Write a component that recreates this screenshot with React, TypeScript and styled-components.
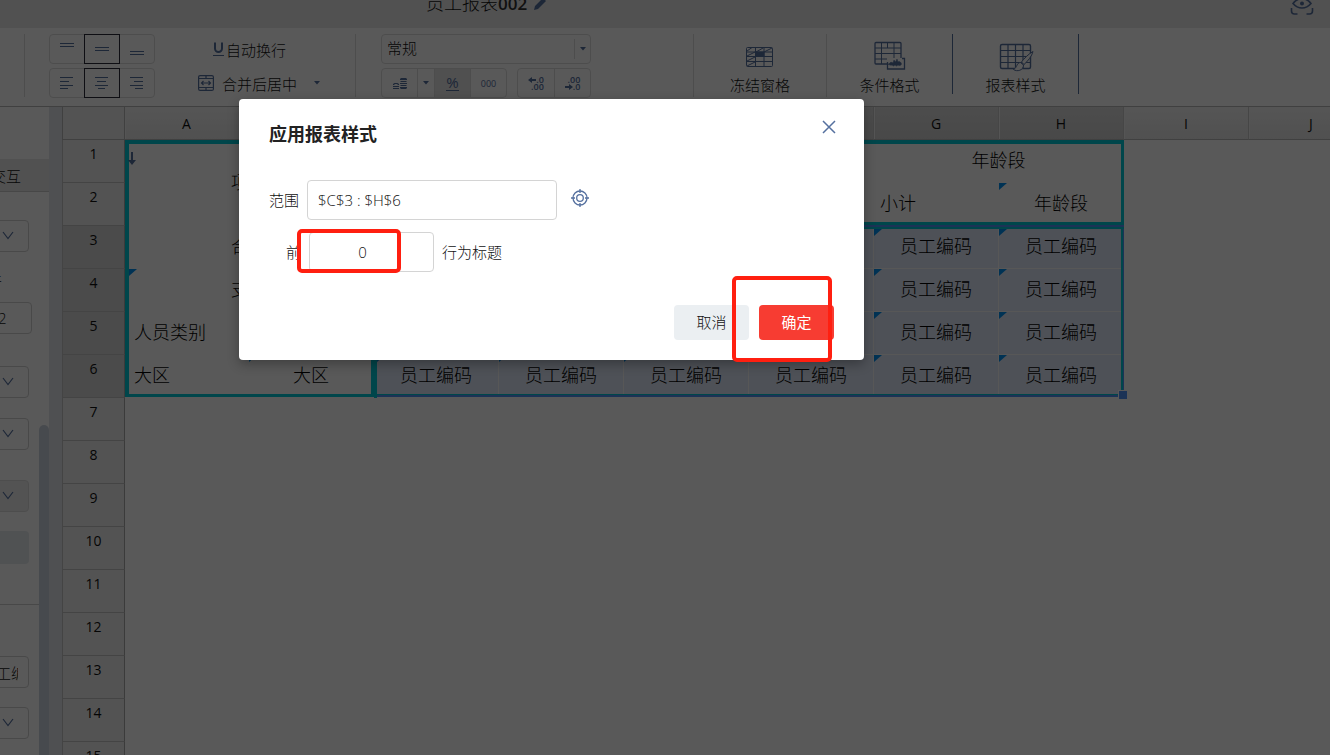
import React from 'react';
import styled, { createGlobalStyle, css } from 'styled-components';

const ink = '#55709f';
const line = '#dcdcdc';
const teal = '#00c8d6';
const blue = '#5292f7';
const fontStack = '"Open Sans", "Noto Sans CJK SC", sans-serif';

const GlobalStyle = createGlobalStyle`
  *, *::before, *::after { box-sizing: border-box; }
  body { margin: 0; overflow: hidden; font-family: ${fontStack}; font-size: 15px; font-weight: 300; color: #111; background: #fff; }
  button, input, select { font-family: ${fontStack}; font-size: 15px; font-weight: 300; color: inherit; margin: 0; }
  svg { display: block; flex: none; }
`;

const App = styled.div`
  position: relative;
  display: flex;
  flex-direction: column;
  height: 100vh;
  overflow: hidden;
`;

/* ---------- title bar ---------- */
const TitleBar = styled.header`
  display: flex;
  flex: none;
  align-items: center;
  height: 50px;
  margin-top: -22px;
  padding: 0 16px 0 426px;
  background: #e8e8e8;
`;
const Title = styled.h1`
  margin: 0;
  font-size: 18px;
  line-height: 24px;
  font-weight: 300;
  b { font-size: 17px; font-weight: 600; color: #333; }
`;
const IconButton = styled.button<{ $push?: boolean }>`
  display: flex;
  padding: 0;
  border: 0;
  background: none;
  margin-left: ${p => (p.$push ? 'auto' : '6px')};
`;

/* ---------- toolbar ---------- */
const Toolbar = styled.div`
  display: flex;
  flex: none;
  height: 79px;
  padding-top: 6px;
  border-bottom: 1px solid #b8b8b8;
`;
const Section = styled.div<{ $w: number; $pad?: number; $strong?: boolean }>`
  display: flex;
  flex: none;
  width: ${p => p.$w}px;
  height: ${p => (p.$strong ? 60 : 63)}px;
  padding-left: ${p => p.$pad ?? 0}px;
  border-right: 1px solid ${p => (p.$strong ? ink : line)};
`;
const Stack = styled.div`
  display: flex;
  flex-direction: column;
  gap: 4px;
  > * { flex: none; }
`;
const Row = styled.div<{ $gap?: number }>`
  display: flex;
  gap: ${p => p.$gap ?? 0}px;
`;
const TextTools = styled(Stack)`
  margin-left: 43px;
`;
const Group = styled.div`
  display: flex;
  height: 30px;
  border: 1px solid ${line};
  border-radius: 4px;
`;
const ToolButton = styled.button<{ $w: number; $framed?: boolean; $active?: boolean; $divided?: boolean }>`
  display: flex;
  align-items: center;
  justify-content: center;
  width: ${p => p.$w}px;
  padding: 0;
  border: 0;
  background: ${p => (p.$active ? '#e4e4e4' : 'none')};
  ${p => p.$divided && css`border-right: 1px solid ${line};`}
  ${p => p.$framed && css`border: 1px solid #2a2a38; height: 30px; margin-top: -1px;`}
`;
const TextTool = styled.button<{ $indent?: number; $gap?: number }>`
  display: flex;
  align-items: center;
  gap: ${p => p.$gap ?? 0}px;
  height: 30px;
  padding: 0 0 0 ${p => p.$indent ?? 0}px;
  border: 0;
  background: none;
  white-space: nowrap;
`;
const FormatBox = styled.div`
  position: relative;
  width: 210px;
  height: 30px;
`;
const FormatSelect = styled.select`
  width: 100%;
  height: 100%;
  padding: 0 24px 2px 5px;
  border: 1px solid ${line};
  border-radius: 4px;
  background: none;
  appearance: none;
`;
const FormatArrow = styled.span`
  position: absolute;
  top: 5px;
  right: 1px;
  display: flex;
  align-items: center;
  justify-content: center;
  width: 16px;
  height: 20px;
  border-left: 1px solid ${line};
  pointer-events: none;
`;
const BigTool = styled.button`
  display: flex;
  flex: 1;
  flex-direction: column;
  align-items: center;
  height: 63px;
  padding: 6px 0 0;
  border: 0;
  background: none;
  line-height: 26px;
`;

/* ---------- side panel ---------- */
const Body = styled.div`
  display: flex;
  flex: 1;
  min-height: 0;
`;
const Panel = styled.aside`
  position: relative;
  flex: none;
  width: 49px;
  overflow: hidden;
`;
const PanelForm = styled.div`
  display: flex;
  flex-direction: column;
  align-items: flex-start;
  margin-left: -24px;
`;
const Tab = styled.button`
  width: 73px;
  height: 33px;
  margin-top: 52px;
  padding: 0 0 0 15px;
  text-align: left;
  border: 0;
  border-bottom: 1px solid #ccc;
  background: #e9e9e9;
`;
const fieldBox = css<{ $off?: boolean }>`
  height: 32px;
  border: 1px solid #d0d0d0;
  border-radius: 4px;
  background: ${p => (p.$off ? '#e8e8e8' : 'none')};
`;
const PickerBox = styled.div<{ $top: number }>`
  position: relative;
  width: 53px;
  margin-top: ${p => p.$top}px;
  svg { position: absolute; right: 15px; top: 11px; pointer-events: none; }
`;
const PickerSelect = styled.select<{ $off?: boolean }>`
  ${fieldBox}
  display: block;
  width: 100%;
  appearance: none;
`;
const PanelLabel = styled.label`
  height: 20px;
  margin: 18px 0 12px -4px;
  line-height: 20px;
`;
const PanelInput = styled.input<{ $w: number; $top?: number }>`
  ${fieldBox}
  width: ${p => p.$w}px;
  margin-top: ${p => p.$top ?? 0}px;
  padding: 0 10px 0 4px;
`;
const Swatch = styled.div`
  width: 53px;
  height: 33px;
  margin-top: 19px;
  border-radius: 4px;
  background: #e6eaee;
`;
const Rule = styled.hr`
  width: 63px;
  height: 1px;
  margin: 40px 0 0;
  border: 0;
  background: #cfcfcf;
`;
const Thumb = styled.div`
  position: absolute;
  top: 318px;
  right: 0;
  width: 10px;
  height: 600px;
  border-radius: 5px;
  background: #ccd4de;
`;
const Gutter = styled.div`
  flex: none;
  width: 13px;
  background: #e2e6ec;
`;

/* ---------- sheet ---------- */
const Sheet = styled.div`
  position: relative;
  flex: 1;
  overflow: hidden;
`;
const Table = styled.table`
  width: 1312px;
  table-layout: fixed;
  border-collapse: separate;
  border-spacing: 0;
`;
const Corner = styled.th`
  width: 63px;
  height: 33px;
  padding: 0;
  background: #eee;
  border: solid #b8b8b8;
  border-width: 0 1px 1px;
`;
const ColHead = styled.th<{ $on?: boolean; $w: number }>`
  width: ${p => p.$w}px;
  padding: 0;
  font-size: 14px;
  font-weight: 400;
  background: linear-gradient(${p => (p.$on ? '#dcdcdc, #cfcfcf' : '#f4f4f4, #e6e6e6')});
  border-right: 1px solid #c8c8c8;
  border-bottom: 1px solid #b8b8b8;
  box-shadow: inset 1px 0 #f4f4f4;
`;
const RowHead = styled.th<{ $on?: boolean }>`
  height: 43px;
  padding: 3px 0 0;
  font-size: 14px;
  line-height: 22px;
  font-weight: 400;
  vertical-align: top;
  background: ${p => (p.$on ? '#d6d6d6' : '#eee')};
  border: solid #c4c4c4;
  border-width: 0 1px 1px;
  border-right-color: #a8a8a8;
`;

/* Lower-case edges carry the table frame, upper-case ones also touch the selection frame. */
const edgeLines: Record<string, string[]> = {
  t: [`inset 0 4px ${teal}`],
  l: [`inset 4px 0 ${teal}`],
  r: [`inset -3px 0 ${teal}`],
  b: ['inset 0 -1px #fff', `inset 0 -4px ${teal}`],
  L: [`inset 3px 0 ${teal}`],
  M: [`inset 0 -1px ${blue}`, `inset 0 -4px ${teal}`],
  T: [`inset 0 1px ${blue}`, `inset 0 3px ${teal}`],
  B: ['inset 0 -1px #fff', `inset 0 -3px ${blue}`, `inset 0 -4px ${teal}`],
  R: [`inset -1px 0 ${blue}`, `inset -3px 0 ${teal}`],
};
const edgeShadow = (edges: string, selected?: boolean) => {
  const out = edges.split('').flatMap(e => edgeLines[e]);
  if (selected) out.push('inset -1px -1px #fafafa');
  return out.length ? out.join(', ') : 'none';
};

const Cell = styled.td<{ $edges?: string; $sel?: boolean; $left?: number }>`
  position: relative;
  height: 43px;
  padding: 0 1px 3px ${p => p.$left ?? 0}px;
  font-size: 18px;
  line-height: 26px;
  color: #000;
  text-align: ${p => (p.$left ? 'left' : 'center')};
  background: ${p => (p.$sel ? '#e0e8f8' : '#fff')};
  box-shadow: ${p => edgeShadow(p.$edges ?? '', p.$sel)};
`;
const Flag = styled.span<{ $x?: number; $y?: number }>`
  position: absolute;
  left: ${p => p.$x ?? 0}px;
  top: ${p => p.$y ?? 0}px;
  border-top: 7px solid #0090f0;
  border-right: 8px solid transparent;
`;
const DownArrow = styled.svg`
  position: absolute;
  left: 3px;
  top: 12px;
`;
const Handle = styled.span`
  position: absolute;
  right: -3px;
  bottom: -1px;
  z-index: 1;
  width: 9px;
  height: 9px;
  border: solid #fff;
  border-width: 1px 0 0 1px;
  background: ${blue};
`;

/* ---------- dialog ---------- */
const Overlay = styled.div`
  position: absolute;
  inset: 0;
  z-index: 2;
  padding: 99px 0 0 239px;
  background: rgba(0, 0, 0, 0.65);
`;
const Dialog = styled.section`
  position: relative;
  width: 625px;
  max-width: 100%;
  padding: 20px 30px;
  border-radius: 4px;
  background: #fff;
  box-shadow: 0 4px 12px rgba(0, 0, 0, 0.3);
`;
const DialogHead = styled.div`
  display: flex;
  align-items: flex-start;
  justify-content: space-between;
  height: 61px;
  padding-top: 1px;
  h2 { margin: 0; font-size: 18px; line-height: 28px; font-weight: 700; color: #222; }
  button { margin-right: -2px; }
`;
const FormRow = styled.div<{ $indent?: number }>`
  display: flex;
  align-items: center;
  gap: 8px;
  height: 40px;
  margin-bottom: 12px;
  padding-left: ${p => p.$indent ?? 0}px;
  label, span { padding-bottom: 2px; }
`;
const TextBox = styled.input<{ $w: number; $center?: boolean }>`
  width: ${p => p.$w}px;
  height: 40px;
  padding: ${p => (p.$center ? '0 26px 0 8px' : '0 10px')};
  text-align: ${p => (p.$center ? 'center' : 'left')};
  border: 1px solid #d4d4d4;
  border-radius: 4px;
  background: #fff;
`;
const Actions = styled.div`
  display: flex;
  justify-content: flex-end;
  gap: 10px;
  margin-top: 33px;
`;
const ActionButton = styled.button<{ $primary?: boolean }>`
  width: 75px;
  height: 35px;
  padding: 0 0 2px;
  border: 0;
  border-radius: 4px;
  font-weight: ${p => (p.$primary ? 400 : 300)};
  color: ${p => (p.$primary ? '#fff' : '#111')};
  background: ${p => (p.$primary ? '#f73c32' : '#ebeff2')};
`;
const Marker = styled.div<{ $x: number; $y: number; $w: number; $h: number }>`
  position: absolute;
  left: ${p => p.$x}px;
  top: ${p => p.$y}px;
  width: ${p => p.$w}px;
  height: ${p => p.$h}px;
  border: 4px solid #ff1f10;
  border-radius: 5px;
  pointer-events: none;
`;

/* ---------- icons ---------- */
const Caret = () => (
  <svg width="6" height="4" viewBox="0 0 6 4" fill={ink}><path d="M0 0h6L3 3.5z" /></svg>
);
const Chevron = () => (
  <svg width="12" height="9" viewBox="0 0 12 9" fill="none" stroke={ink} strokeWidth="1.2"><path d="M1 1l5 6.500 5-6.500" /></svg>
);
const Lines = ({ d }: { d: string }) => (
  <svg width="16" height="16" viewBox="0 0 16 16" fill="none" stroke={ink}><path d={d} /></svg>
);
const UnderlineIcon = () => (
  <svg width="13" height="16" viewBox="0 0 13 16" fill="none" stroke={ink}>
    <path d="M2 1.500V7.500a3.500 3.500 0 0 0 7 0V1.500" strokeWidth="2" /><path d="M0 14.500h11" />
  </svg>
);
const MergeIcon = () => (
  <svg width="16" height="16" viewBox="0 0 16 16" fill="none" stroke={ink} strokeWidth="1.2">
    <rect x=".6" y=".6" width="14.800" height="14.800" rx="1.500" />
    <path d="M1 3.500h14M1 12.500h14M8 1v3M8 12v3M3.500 8h9M5.500 6l-2 2 2 2M10.500 6l2 2-2 2" />
  </svg>
);
const CoinsIcon = () => (
  <svg width="14" height="11" viewBox="0 0 14 11" fill={ink}>
    <path d="M8 0h5l1 1v1H7V1zM7.500 3h6v1h-6zM7 5h7v1H7zM7.500 7h6v1h-6zM7 9h7v1l-1 1H8l-1-1zM1.500 5h3L6 6v1H5L4 6H2L1 7H0V6zM0 8h6v1H0zM0 10h6v1H0z" />
  </svg>
);
const MoneyText = styled.span<{ $size: number; $line?: boolean }>`
  color: ${ink};
  font-size: ${p => p.$size}px;
  font-weight: 400;
  line-height: 17px;
  ${p => p.$line && css`border-bottom: 1px solid ${ink}; line-height: 15px;`}
`;
const Decimals = styled.span`
  display: flex;
  flex-direction: column;
  align-items: flex-end;
  color: ${ink};
  font-size: 9px;
  font-weight: 600;
  line-height: 7px;
  span { display: flex; align-items: center; }
`;
const ArrowIcon = ({ left }: { left?: boolean }) => (
  <svg width="8" height="6" viewBox="0 0 8 6" fill={ink}>
    <path d={left ? 'M0 3l4-3v2h4v2H4v2z' : 'M8 3L4 0v2H0v2h4v2z'} />
  </svg>
);
const FreezeIcon = () => (
  <svg width="36" height="32" viewBox="0 0 36 32" fill="none" stroke={ink}>
    <rect x="4.500" y="7.500" width="26" height="19" rx="1" />
    <path d="M13.500 7.500v19M22 7.500v19M4.500 12h26M4.500 16.500h26M4.500 21.500h26M5 11l5-3.500M5 16l8-4M5 21l8-4M5 26l8-4M14 12l7-4M22 12l8-4" />
    <path d="M13.500 12H22v4.500h-8.500z" fill={ink} />
  </svg>
);
const ConditionIcon = () => (
  <svg width="36" height="32" viewBox="0 0 36 32" fill="none" stroke={ink}>
    <path d="M15 24H4a1 1 0 0 1-1-1V3.500a1 1 0 0 1 1-1h24a1 1 0 0 1 1 1V18" strokeWidth="1.300" />
    <path d="M9.500 2.500V24M15.500 2.500V8M22 2.500V18M3 8h26M3 13.500h26M3 19h12" />
    <path d="M15.500 22v7h17V18.500H30" strokeWidth="1.300" />
    <path d="M17 24c1-2 3-2 4-1l1-3 1.500 2L25 19l1 3c1.500-1 3 0 3.500 2-.5 1.500-2 2-3.500 1l-1.500 1-1.500-1-1.500 1-1.500-1c-1.500.5-2.500 0-4-1z" fill={ink} strokeWidth=".5" />
  </svg>
);
const StyleIcon = () => (
  <svg width="36" height="32" viewBox="0 0 36 32" fill="none" stroke={ink}>
    <rect x="2.500" y="4.500" width="30" height="24" rx="1.500" strokeWidth="1.400" />
    <path d="M10 4.500v24M17.500 4.500v24M25 4.500v24M2.500 10.500h30M2.500 16.500h30M2.500 22.500h30" strokeWidth="1.200" />
    <path d="M35 11.500c-4.500 2.500-9 7-11.500 10.500l2.500 2.500c3.500-3 8-8.500 9-13zM22.500 22.500c-4 0-3 5-7 7 3.500 2.500 10 1 10-4.500z" fill="#fff" />
  </svg>
);
const PencilIcon = () => (
  <svg width="15" height="15" viewBox="0 0 15 15" fill={ink}><path d="M1 14l1-4 8-8 3 3-8 8zM11 1l1-1 3 3-1 1z" /></svg>
);
const PreviewIcon = () => (
  <svg width="24" height="24" viewBox="0 0 24 24" fill="none" stroke={ink} strokeWidth="1.600">
    <path d="M1.500 17v3a3 3 0 0 0 3 3h3M22.500 17v3a3 3 0 0 1-3 3h-3M1.500 7V5a3 3 0 0 1 3-3h3M22.500 7V5a3 3 0 0 0-3-3h-3" />
    <path d="M3 12.500c5-6.500 13-6.500 18 0-5 6-13 6-18 0z" /><circle cx="12" cy="12.500" r="1.200" fill={ink} />
  </svg>
);
const CloseIcon = () => (
  <svg width="14" height="14" viewBox="0 0 14 14" stroke={ink} strokeWidth="1.500"><path d="M1 1l12 12M13 1L1 13" /></svg>
);
const TargetIcon = () => (
  <svg width="18" height="18" viewBox="0 0 18 18" fill="none" stroke={ink} strokeWidth="1.300">
    <circle cx="9" cy="9" r="7" /><circle cx="9" cy="9" r="3.300" />
    <path d="M9 0v4M9 14v4M0 9h4M14 9h4" />
  </svg>
);
const PickButton = styled(IconButton)`
  margin: -4px 0 0 6px;
`;

const Picker = ({ top, off, label }: { top: number; off?: boolean; label: string }) => (
  <PickerBox $top={top}>
    <PickerSelect $off={off} disabled={off} aria-label={label} />
    <Chevron />
  </PickerBox>
);

const columns = ['A', 'B', 'C', 'D', 'E', 'F', 'G', 'H', 'I', 'J'];
const dataCols = ['C', 'D', 'E', 'F', 'G', 'H'];

const dataCells = (row: number) =>
  dataCols.map(c => {
    const edges = (row === 3 ? 'T' : '') + (c === 'C' ? 'L' : '') + (row === 6 ? 'B' : '') + (c === 'H' ? 'R' : '');
    return (
      <Cell key={c} $sel $edges={edges}>
        <Flag $x={c === 'C' ? 3 : 0} $y={row === 3 ? 3 : 0} />
        员工编码
        {c === 'H' && row === 6 && <Handle />}
      </Cell>
    );
  });

const rowCells = (row: number) => {
  switch (row) {
    case 1:
      return (
        <>
          <Cell colSpan={2} rowSpan={2} $edges="tlr">
            <DownArrow width="8" height="13" viewBox="0 0 8 13" fill={ink}><path d="M3 0h2v8h3l-4 5-4-5h3z" /></DownArrow>
            项目
          </Cell>
          <Cell $edges="tL" /><Cell $edges="t" /><Cell $edges="t" /><Cell $edges="t" />
          <Cell colSpan={2} $edges="tr">年龄段</Cell>
        </>
      );
    case 2:
      return (
        <>
          <Cell $edges="ML" /><Cell $edges="M" /><Cell $edges="M" /><Cell $edges="M" />
          <Cell $left={6} $edges="M">小计</Cell>
          <Cell $edges="Mr"><Flag />年龄段</Cell>
        </>
      );
    case 3:
      return <><Cell colSpan={2} $edges="lr">合计</Cell>{dataCells(3)}</>;
    case 4:
      return <><Cell colSpan={2} $edges="lr"><Flag $x={4} />支部</Cell>{dataCells(4)}</>;
    case 5:
      return <><Cell $left={9} $edges="l">人员类别</Cell><Cell $edges="r" />{dataCells(5)}</>;
    case 6:
      return <><Cell $left={9} $edges="bl">大区</Cell><Cell $edges="br"><Flag />大区</Cell>{dataCells(6)}</>;
    default:
      return null;
  }
};

export default function ReportEditor() {
  return (
    <App>
      <GlobalStyle />
      <TitleBar>
        <Title>员工报表<b>002</b></Title>
        <IconButton aria-label="重命名"><PencilIcon /></IconButton>
        <IconButton $push aria-label="预览"><PreviewIcon /></IconButton>
      </TitleBar>

      <Toolbar>
        <Section $w={25} />
        <Section $w={331} $pad={24}>
          <Stack>
            <Group>
              <ToolButton $w={34} aria-label="顶端对齐"><Lines d="M1 2.500h14M1 5.500h14" /></ToolButton>
              <ToolButton $w={36} $framed aria-label="垂直居中"><Lines d="M1 6.500h14M1 9.500h14" /></ToolButton>
              <ToolButton $w={34} aria-label="底端对齐"><Lines d="M1 10.500h14M1 13.500h14" /></ToolButton>
            </Group>
            <Group>
              <ToolButton $w={34} aria-label="左对齐"><Lines d="M1 2.500h13M1 6.500h9M1 10.500h13M1 13.500h8" /></ToolButton>
              <ToolButton $w={36} $framed aria-label="居中"><Lines d="M1 2.500h13M3 6.500h9M1 10.500h13M4 13.500h7" /></ToolButton>
              <ToolButton $w={34} aria-label="右对齐"><Lines d="M1 2.500h13M5 6.500h9M1 10.500h13M6 13.500h8" /></ToolButton>
            </Group>
          </Stack>
          <TextTools>
            <TextTool $indent={15}><UnderlineIcon />自动换行</TextTool>
            <Row $gap={17}>
              <TextTool $gap={8}><MergeIcon />合并后居中</TextTool>
              <TextTool aria-label="合并选项"><Caret /></TextTool>
            </Row>
          </TextTools>
        </Section>
        <Section $w={338} $pad={25}>
          <Stack>
            <FormatBox>
              <FormatSelect aria-label="数字格式"><option>常规</option></FormatSelect>
              <FormatArrow><Caret /></FormatArrow>
            </FormatBox>
            <Row $gap={10}>
              <Group>
                <ToolButton $w={36} $divided aria-label="货币"><CoinsIcon /></ToolButton>
                <ToolButton $w={17} $divided aria-label="货币选项"><Caret /></ToolButton>
                <ToolButton $w={36} $active $divided><MoneyText $size={15} $line>%</MoneyText></ToolButton>
                <ToolButton $w={35}><MoneyText $size={9}>000</MoneyText></ToolButton>
              </Group>
              <Group>
                <ToolButton $w={37} $divided><Decimals><span><ArrowIcon left />.0</span><span>.00</span></Decimals></ToolButton>
                <ToolButton $w={35}><Decimals><span>.00</span><span><ArrowIcon />.0</span></Decimals></ToolButton>
              </Group>
            </Row>
          </Stack>
        </Section>
        <Section $w={133}><BigTool><FreezeIcon />冻结窗格</BigTool></Section>
        <Section $w={126} $strong><BigTool><ConditionIcon />条件格式</BigTool></Section>
        <Section $w={126} $strong><BigTool><StyleIcon />报表样式</BigTool></Section>
      </Toolbar>

      <Body>
        <Panel>
          <PanelForm>
            <Tab>交互</Tab>
            <Picker top={28} label="字段" />
            <PanelLabel htmlFor="cond">条件</PanelLabel>
            <PanelInput id="cond" $w={56} defaultValue="002" />
            <Picker top={32} label="类型" />
            <Picker top={20} label="格式" />
            <Picker top={30} off label="排序" />
            <Swatch />
            <Rule />
            <PanelInput $w={53} $top={51} defaultValue="员工编码" aria-label="名称" />
            <Picker top={19} label="汇总" />
          </PanelForm>
          <Thumb />
        </Panel>
        <Gutter />
        <Sheet>
          <Table>
            <thead>
              <tr>
                <Corner />
                {columns.map((c, i) => <ColHead key={c} $w={i === 0 ? 124 : 125} $on={i >= 2 && i <= 7}>{c}</ColHead>)}
              </tr>
            </thead>
            <tbody>
              {Array.from({ length: 15 }, (_, i) => i + 1).map(n => (
                <tr key={n}>
                  <RowHead $on={n >= 3 && n <= 6}>{n}</RowHead>
                  {rowCells(n)}
                </tr>
              ))}
            </tbody>
          </Table>
        </Sheet>
      </Body>

      <Overlay>
        <Dialog role="dialog" aria-labelledby="dialog-title">
          <DialogHead>
            <h2 id="dialog-title">应用报表样式</h2>
            <IconButton aria-label="关闭"><CloseIcon /></IconButton>
          </DialogHead>
          <FormRow>
            <label htmlFor="range">范围</label>
            <TextBox id="range" $w={250} defaultValue="$C$3 : $H$6" />
            <PickButton aria-label="选择范围"><TargetIcon /></PickButton>
          </FormRow>
          <FormRow $indent={17}>
            <label htmlFor="rows">前</label>
            <TextBox id="rows" $w={125} $center defaultValue="0" />
            <span>行为标题</span>
          </FormRow>
          <Actions>
            <ActionButton>取消</ActionButton>
            <ActionButton $primary>确定</ActionButton>
          </Actions>
          <Marker $x={58} $y={130} $w={104} $h={44} />
          <Marker $x={493} $y={177} $w={100} $h={86} />
        </Dialog>
      </Overlay>
    </App>
  );
}
